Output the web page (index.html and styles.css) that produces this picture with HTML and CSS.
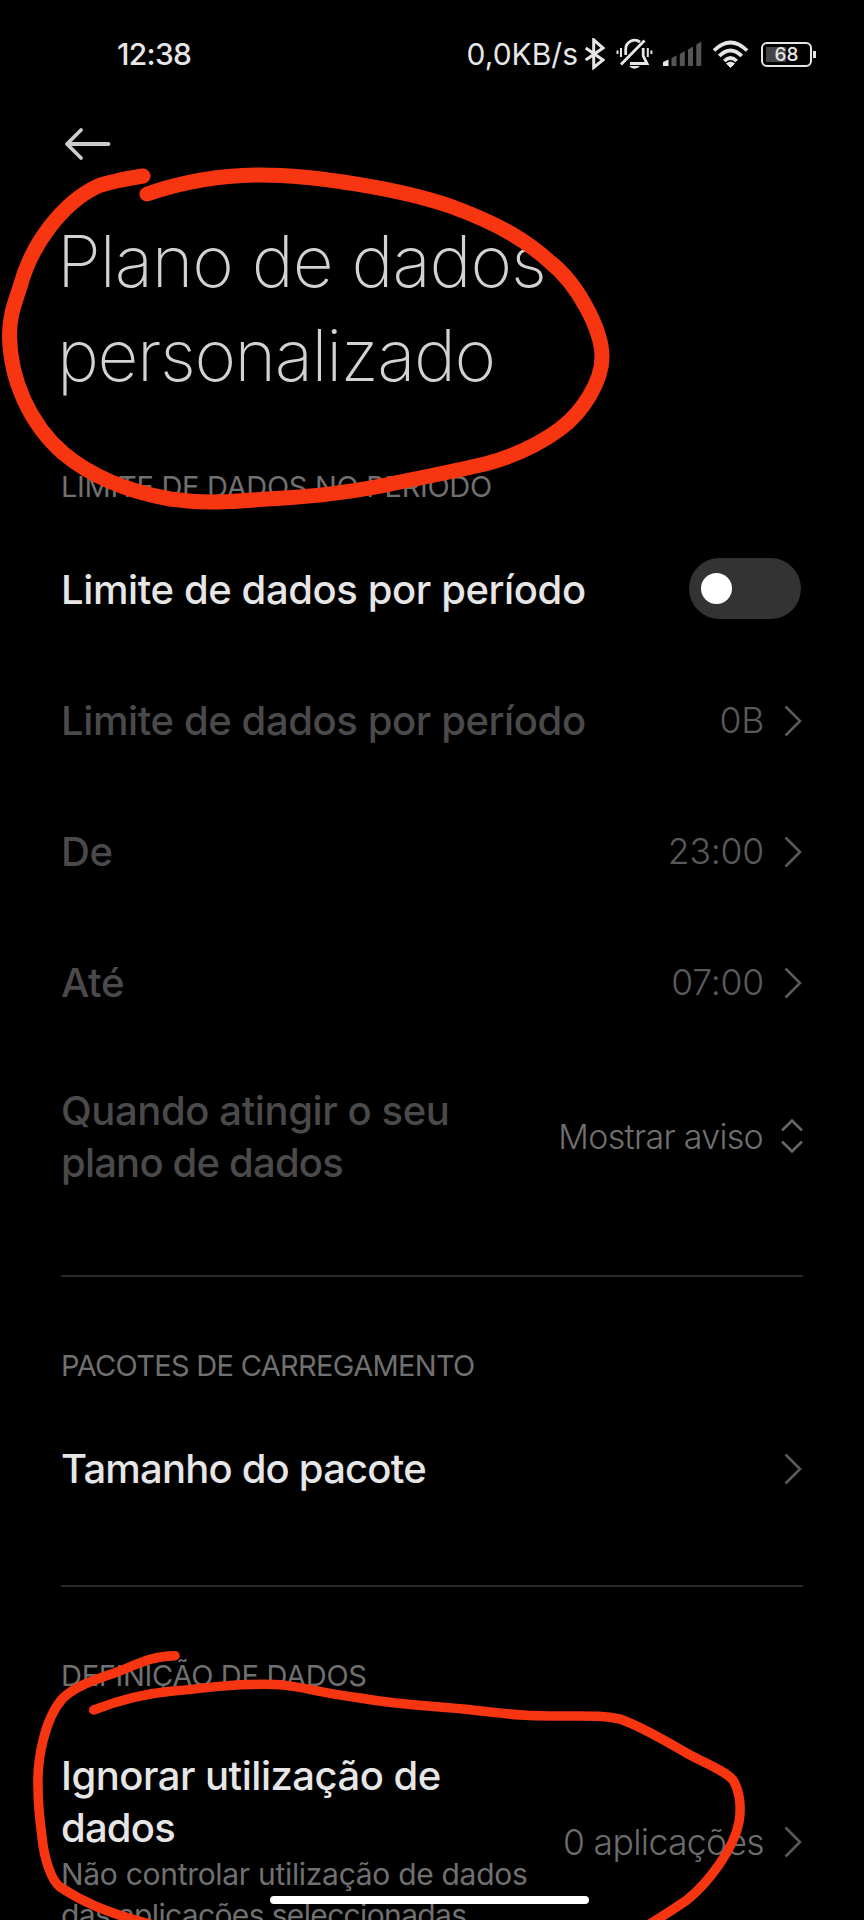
FILE: index.html
```
<!DOCTYPE html>
<html lang="pt">
<head>
  <meta charset="UTF-8" />
  <meta name="viewport" content="width=device-width, initial-scale=1.0"/>
  <title>Plano de dados personalizado</title>
  <link rel="stylesheet" href="styles.css">
</head>
<body>

  <div class="screen">
    <div class="status-bar">
      <span class="clock">12:38</span>
      <div class="status-icons">
        <span class="speed">0,0KB/s</span>
        <svg class="bluetooth" width="22" height="32" viewBox="0 0 22 32">
          <path d="M2.7 10L20 22L10.7 29.5V1.8L20 10L2.7 22"/>
        </svg>
        <svg class="mute" width="37" height="32" viewBox="0 0 37 32">
          <path d="M5 26.5L28.5 2.5M9.7 17V11.5A9 9 0 0 1 24 4M27.2 10V18L31 25.5H14"/>
          <path class="thin" d="M1.5 12.5V16M5 10V19M31.8 10V19M35.4 12.5V16"/>
          <path class="fill" d="M13 28H24Q18.5 33.5 13 28Z"/>
        </svg>
        <svg class="signal" width="39" height="26" viewBox="0 0 39 26">
          <path class="on" d="M0 21L5.5 18.5V25H0Z"/>
          <path d="M8.5 17L13.5 14.5V25H8.5ZM16.8 13L21.8 10V25H16.8ZM25 8.5L30 5.5V25H25ZM33.3 3.5L38.3 .5V25H33.3Z"/>
        </svg>
        <svg class="wifi" width="37" height="28" viewBox="0 0 37 28">
          <path d="M2 10.5Q18.5 -5.5 35 10.5M7.3 16Q18.5 5 29.7 16M12.3 21Q18.5 15 24.7 21"/>
          <path class="dot" d="M14.5 23.5Q18.5 20.5 22.5 23.5L18.5 27.5Z"/>
        </svg>
        <div class="battery"><span>68</span></div>
      </div>
    </div>

    <header>
      <svg class="back" width="47" height="34" viewBox="0 0 47 34">
        <path d="M17 3L3 17L17 31M3 17H44.5"/>
      </svg>
      <h1><span class="line1">Plano de dados</span><br><span class="line2">personalizado</span></h1>
    </header>

    <section>
      <h2>LIMITE DE DADOS NO PERÍODO</h2>
      <div class="row">
        <div class="label">Limite de dados por período</div>
        <div class="toggle"></div>
      </div>
      <div class="row disabled">
        <div class="label">Limite de dados por período</div>
        <div class="value">0B</div>
        <svg class="chevron" width="20" height="34" viewBox="0 0 20 34"><path d="M2.5 2.5L17 17L2.5 31.5"/></svg>
      </div>
      <div class="row disabled">
        <div class="label">De</div>
        <div class="value">23:00</div>
        <svg class="chevron" width="20" height="34" viewBox="0 0 20 34"><path d="M2.5 2.5L17 17L2.5 31.5"/></svg>
      </div>
      <div class="row disabled">
        <div class="label">Até</div>
        <div class="value">07:00</div>
        <svg class="chevron" width="20" height="34" viewBox="0 0 20 34"><path d="M2.5 2.5L17 17L2.5 31.5"/></svg>
      </div>
      <div class="row disabled">
        <div class="label multi">Quando atingir o seu<br><span class="tight">plano de dados</span></div>
        <div class="value notice">Mostrar aviso</div>
        <svg class="updown" width="24" height="36" viewBox="0 0 24 36"><path d="M2 12.5L12 2.5L22 12.5M2 23.5L12 33.5L22 23.5"/></svg>
      </div>
    </section>

    <section>
      <h2 class="packages">PACOTES DE CARREGAMENTO</h2>
      <div class="row">
        <div class="label tight">Tamanho do pacote</div>
        <svg class="chevron" width="20" height="34" viewBox="0 0 20 34"><path d="M2.5 2.5L17 17L2.5 31.5"/></svg>
      </div>
    </section>

    <section>
      <h2>DEFINIÇÃO DE DADOS</h2>
      <div class="row">
        <div class="label multi">
          Ignorar utilização de<br><span class="tight">dados</span>
          <p>Não controlar utilização de dados<br><span class="tight-sub">das aplicações seleccionadas</span></p>
        </div>
        <div class="value apps">0 aplicações</div>
        <svg class="chevron" width="20" height="34" viewBox="0 0 20 34"><path d="M2.5 2.5L17 17L2.5 31.5"/></svg>
      </div>
    </section>

    <!-- red marker drawn over the screen -->
    <svg class="marker" width="864" height="1920" viewBox="0 0 864 1920">
      <path stroke-width="15" d="M147 194C185 181 222 175 260 175C315 175 400 189 450 206C505 226 530 244 550 262C578 284 602 330 602 357C602 381 583 412 560 429C541 443 515 456 485 464C455 471 430 476 400 482C360 491 310 497 267 499C230 502 205 504 170 499C120 490 88 474 63 453C30 424 10 380 9.5 335C9.5 315 15 303 20 287C31 245 62 203 98 186Q112 181 143 176"/>
      <path stroke-width="9.5" d="M93.7 1710C127 1697 150 1693 173 1691C210 1688 220 1685 250 1684.5C300 1683 300 1690 360 1698C400 1705 420 1705 463 1709C510 1714 520 1716 550 1716C590 1716 602 1715 620 1719C645 1728 665 1741 690 1755C707 1764 725 1771 733 1780C741 1793 741 1811 739 1822C734 1849 708 1883 687 1900Q665 1915 640 1930"/>
      <path stroke-width="9.5" d="M175 1655.7C152 1656 140 1663 117 1672C95 1680 77 1685 63 1698C45 1718 37 1758 38 1787C38 1807 40 1822 42 1837C44 1858 51 1880 60 1887C80 1900 103 1912 150 1924"/>
    </svg>
    <div class="home-bar"></div>
  </div>

</body>
</html>
```

FILE: styles.css
```
* {
  box-sizing: border-box;
  margin: 0;
  padding: 0;
}

body {
  background: #000;
  color: #e6e6e6;
  font-family: 'Inter', sans-serif;
}

.screen {
  position: relative;
  width: 864px;
  height: 1920px;
  overflow: hidden;
}

svg {
  display: block;
  flex: none;
}

svg path {
  fill: none;
  stroke: currentColor;
}

.status-bar {
  display: flex;
  justify-content: space-between;
  align-items: center;
  height: 108px;
  padding: 0 48px 0 117px;
  font-size: 30px;
  white-space: nowrap;
}

.clock {
  font-weight: 500;
  letter-spacing: -0.7px;
}

.status-icons {
  display: flex;
  align-items: center;
}

.speed {
  margin-right: 5px;
}

.bluetooth {
  margin-right: 11px;
  stroke-width: 3;
}

.mute {
  margin-right: 10px;
  stroke-width: 2.8;
}

.mute .thin {
  stroke-width: 2;
}

.mute .fill {
  fill: currentColor;
  stroke: none;
}

.signal {
  margin-right: 10px;
}

.signal path {
  fill: #555;
  stroke: none;
}

.signal .on {
  fill: #e6e6e6;
}

.wifi {
  margin-right: 12px;
  stroke-width: 3.8;
}

.wifi .dot {
  fill: currentColor;
  stroke-width: 1;
}

.battery {
  position: relative;
  width: 51px;
  height: 25px;
  margin-right: 4px;
  border: 2px solid #e6e6e6;
  border-radius: 6px;
  background: linear-gradient(#444, #444) 3px 3px / 20px 15px no-repeat;
  font-size: 19px;
  font-weight: 500;
  line-height: 21px;
  text-align: center;
}

.battery::after {
  content: '';
  position: absolute;
  top: 7px;
  right: -6px;
  width: 3px;
  height: 7px;
  background: #e6e6e6;
}

header {
  padding: 19px 61px 67px 57px;
}

.back {
  margin: 0 0 53px 7px;
  color: #ccc;
  stroke-width: 3.8;
  stroke-linecap: round;
  stroke-linejoin: round;
}

h1 {
  color: #d2d2d2;
  font-size: 71px;
  font-weight: 200;
  line-height: 94px;
  white-space: nowrap;
}

.line1 {
  letter-spacing: -1.05px;
}

.line2 {
  letter-spacing: -1.4px;
}

section {
  margin: 0 61px;
}

section + section {
  margin-top: 50px;
  padding-top: 71px;
  border-top: 2px solid #292929;
}

h2 {
  margin-bottom: 20px;
  color: #707070;
  font-size: 29px;
  font-weight: 400;
  line-height: 36px;
  letter-spacing: -0.3px;
  white-space: nowrap;
}

.packages {
  letter-spacing: -0.68px;
}

.row {
  display: flex;
  align-items: center;
  min-height: 131px;
  padding: 36px 0;
}

.label {
  flex: 1;
  margin-top: -2px;
  font-size: 40px;
  font-weight: 500;
  line-height: 52px;
  letter-spacing: -0.4px;
  white-space: nowrap;
}

.label.multi {
  margin-top: 0;
  letter-spacing: -0.5px;
}

.tight,
.label.tight {
  letter-spacing: -0.8px;
}

.disabled .label {
  color: #4a4a4a;
}

.disabled .label.multi {
  letter-spacing: -0.4px;
}

.label p {
  color: #707070;
  font-size: 30px;
  font-weight: 400;
  line-height: 41px;
  letter-spacing: -0.3px;
}

.tight-sub {
  letter-spacing: -0.65px;
}

.value {
  margin: -2px 19px 0 0;
  color: #6c6c6c;
  font-size: 35.5px;
  font-weight: 300;
  letter-spacing: -0.2px;
  white-space: nowrap;
}

.disabled .value {
  color: #5a5a5a;
}

.disabled .notice {
  margin-right: 17px;
  color: #707070;
  font-size: 34px;
  letter-spacing: -0.7px;
}

.apps {
  letter-spacing: -0.65px;
}

.chevron {
  margin-top: -2px;
  color: #5a5a5a;
  stroke-width: 2.6;
}

.updown {
  margin: -2px -1px 0 0;
  color: #666;
  stroke-width: 2.6;
}

.toggle {
  width: 112px;
  height: 61px;
  margin: -4px 2px 0 0;
  padding: 15px 12px;
  border-radius: 31px;
  background: #333;
}

.toggle::before {
  content: '';
  display: block;
  width: 31px;
  height: 31px;
  border-radius: 50%;
  background: #fff;
}

.marker {
  position: absolute;
  top: 0;
  left: 0;
  color: #f73510;
  stroke-linecap: round;
}

.home-bar {
  position: absolute;
  left: 270px;
  bottom: 16px;
  width: 319px;
  height: 8px;
  border-radius: 4px;
  background: #fff;
}
```
